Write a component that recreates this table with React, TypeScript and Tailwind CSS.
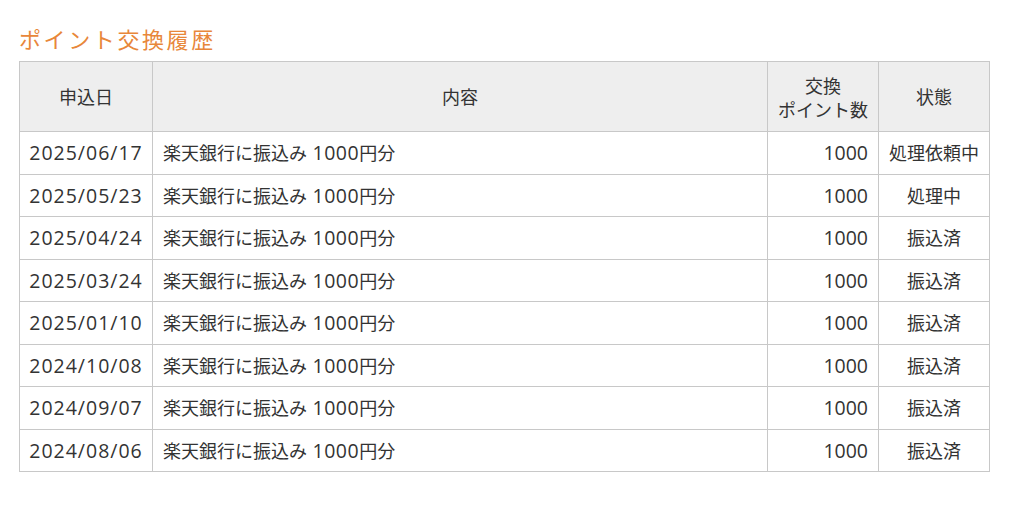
import React from "react";

const rows = [
  ["2025/06/17", "処理依頼中"],
  ["2025/05/23", "処理中"],
  ["2025/04/24", "振込済"],
  ["2025/03/24", "振込済"],
  ["2025/01/10", "振込済"],
  ["2024/10/08", "振込済"],
  ["2024/09/07", "振込済"],
  ["2024/08/06", "振込済"],
];

export default function App() {
  return (
    <div className="w-[1024px] h-[523px] bg-white px-[19px] pt-[24px] text-[#333333] font-['Noto_Sans_CJK_JP']">
      <h2 className="text-[22px] leading-[28px] text-[#e8873a] tracking-[2.6px] mb-[9px]">
        ポイント交換履歴
      </h2>
      <table className="w-[971px] border-collapse text-[18px] leading-[25px]">
        <colgroup>
          <col className="w-[133px]" />
          <col className="w-[616px]" />
          <col className="w-[111px]" />
          <col className="w-[111px]" />
        </colgroup>
        <thead>
          <tr className="bg-[#eeeeee] h-[70px]">
            <th className="border border-[#c8c8c8] font-normal text-center px-[10px]">申込日</th>
            <th className="border border-[#c8c8c8] font-normal text-center px-[10px]">内容</th>
            <th className="border border-[#c8c8c8] font-normal text-center px-[4px] leading-[24px] whitespace-nowrap">
              交換
              <br />
              ポイント数
            </th>
            <th className="border border-[#c8c8c8] font-normal text-center px-[6px]">状態</th>
          </tr>
        </thead>
        <tbody>
          {rows.map(([d, s]) => (
            <tr key={d} className="h-[42.5px]">
              <td className="border border-[#c8c8c8] px-[6px] text-center whitespace-nowrap">
                <span className="font-['Open_Sans'] text-[19.5px] tracking-[1px]">{d}</span>
              </td>
              <td className="border border-[#c8c8c8] px-[10px] text-left">
                楽天銀行に振込み
                <span className="font-['Open_Sans'] text-[19.5px] tracking-[0.5px]"> 1000</span>
                円分
              </td>
              <td className="border border-[#c8c8c8] px-[10px] text-right">
                <span className="font-['Open_Sans'] text-[19.5px]">1000</span>
              </td>
              <td className="border border-[#c8c8c8] px-[4px] text-center whitespace-nowrap">{s}</td>
            </tr>
          ))}
        </tbody>
      </table>
    </div>
  );
}
